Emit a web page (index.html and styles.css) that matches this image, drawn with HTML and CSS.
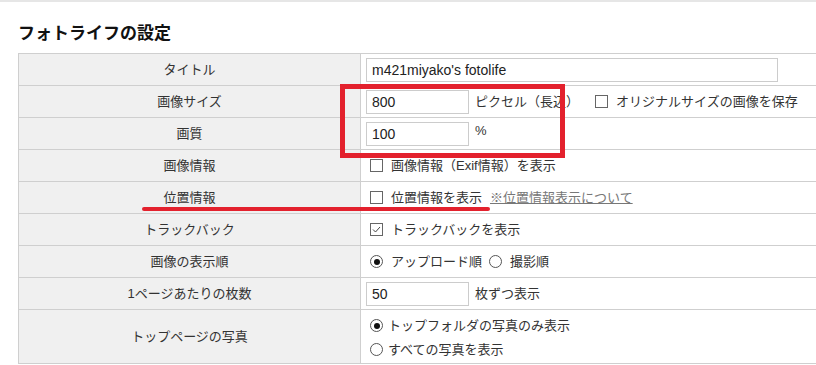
FILE: index.html
```html
<!DOCTYPE html>
<html lang="ja">
<head>
    <meta charset="UTF-8">
    <meta name="viewport" content="width=device-width, initial-scale=1.0">
    <title>フォトライフの設定</title>
    <link rel="stylesheet" href="styles.css">
</head>
<body>
    <div class="topline"></div>
    <div class="page">
        <h2 class="heading">フォトライフの設定</h2>
        <table class="settings">
            <tr>
                <th>タイトル</th>
                <td><div class="field"><input type="text" class="text wide" value="m421miyako's fotolife"></div></td>
            </tr>
            <tr>
                <th>画像サイズ</th>
                <td>
                    <div class="field">
                        <input type="text" class="text short" value="800">
                        <span class="unit">ピクセル（長辺）</span>
                        <label class="opt opt-gap"><span class="check"></span>オリジナルサイズの画像を保存</label>
                    </div>
                </td>
            </tr>
            <tr>
                <th>画質</th>
                <td>
                    <div class="field">
                        <input type="text" class="text short" value="100">
                        <span class="unit percent">%</span>
                    </div>
                </td>
            </tr>
            <tr>
                <th>画像情報</th>
                <td><div class="field"><label class="opt"><span class="check"></span>画像情報（Exif情報）を表示</label></div></td>
            </tr>
            <tr>
                <th>位置情報</th>
                <td>
                    <div class="field">
                        <label class="opt"><span class="check"></span>位置情報を表示</label>
                        <a class="help" href="#">※位置情報表示について</a>
                    </div>
                </td>
            </tr>
            <tr>
                <th>トラックバック</th>
                <td>
                    <div class="field">
                        <label class="opt">
                            <span class="check">
                                <svg width="11" height="11" viewBox="0 0 11 11"><polyline points="2,5.5 4.5,8 9,3" fill="none" stroke="#444" stroke-width="1"/></svg>
                            </span>トラックバックを表示
                        </label>
                    </div>
                </td>
            </tr>
            <tr>
                <th>画像の表示順</th>
                <td>
                    <div class="field">
                        <label class="opt"><span class="radio on"></span>アップロード順</label>
                        <label class="opt"><span class="radio"></span>撮影順</label>
                    </div>
                </td>
            </tr>
            <tr>
                <th>1ページあたりの枚数</th>
                <td>
                    <div class="field">
                        <input type="text" class="text short" value="50">
                        <span class="unit">枚ずつ表示</span>
                    </div>
                </td>
            </tr>
            <tr class="tall">
                <th>トップページの写真</th>
                <td>
                    <div class="stack">
                        <label class="opt tight"><span class="radio on"></span>トップフォルダの写真のみ表示</label>
                        <label class="opt tight"><span class="radio"></span>すべての写真を表示</label>
                    </div>
                </td>
            </tr>
        </table>
    </div>

    <!-- red annotations drawn over the screenshot -->
    <div class="mark-box"></div>
    <div class="mark-line"></div>
</body>
</html>
```

FILE: styles.css
```css
body {
    margin: 0;
    font-family: "Liberation Sans", "Noto Sans CJK JP", sans-serif;
    font-size: 13px;
    color: #333;
    background-color: #fff;
    overflow: hidden;
}
.topline {
    height: 2px;
    background-color: #e6e6e6;
}
.page {
    padding-left: 18px;
}
.heading {
    margin: 20px 0 7px;
    font-size: 17px;
    line-height: 24px;
    font-weight: bold;
    color: #111;
}
.settings {
    width: 820px;
    border-collapse: collapse;
}
.settings th,
.settings td {
    border: 1px solid #cfcfcf;
    height: 31px;
    padding: 0;
    line-height: 18px;
}
.settings th {
    width: 341px;
    background-color: #f0f0f0;
    font-weight: normal;
    text-align: center;
}
.settings td {
    padding-left: 5px;
}
.settings .tall th,
.settings .tall td {
    height: 53px;
}
.field {
    display: flex;
    align-items: center;
}
.stack {
    display: flex;
    flex-direction: column;
    padding-top: 2px;
}
.text {
    box-sizing: border-box;
    height: 24px;
    margin: 0;
    padding: 0 5px;
    border: 1px solid #ccc;
    font-family: "Liberation Sans", sans-serif;
    font-size: 14px;
    color: #222;
}
.wide {
    width: 412px;
}
.short {
    width: 103px;
}
.unit {
    margin-left: 6px;
}
.percent {
    margin-top: -6px;
}
.opt {
    display: flex;
    align-items: center;
    margin-right: 3px;
}
.opt-gap {
    margin-left: 12px;
}
.tight {
    height: 24px;
}
.check {
    box-sizing: border-box;
    width: 13px;
    height: 13px;
    margin: 0 8px 0 4px;
    border: 1px solid #666;
    display: flex;
    align-items: center;
    justify-content: center;
    background-color: #fff;
}
.radio {
    box-sizing: border-box;
    width: 13px;
    height: 13px;
    margin: 0 8px 0 4px;
    border: 1px solid #555;
    border-radius: 50%;
    position: relative;
    background-color: #fff;
}
.radio.on::after {
    content: "";
    position: absolute;
    left: 2.5px;
    top: 2.5px;
    width: 6px;
    height: 6px;
    border-radius: 50%;
    background-color: #111;
}
.tight .radio {
    margin-right: 5px;
}
.help {
    margin-left: 5px;
    color: #777;
}
.mark-box {
    position: absolute;
    left: 340px;
    top: 84px;
    width: 225px;
    height: 74px;
    box-sizing: border-box;
    border: 5px solid #e3212d;
}
.mark-line {
    position: absolute;
    left: 142px;
    top: 207px;
    width: 348px;
    height: 4px;
    border-radius: 2px;
    background-color: #e3212d;
}
```
